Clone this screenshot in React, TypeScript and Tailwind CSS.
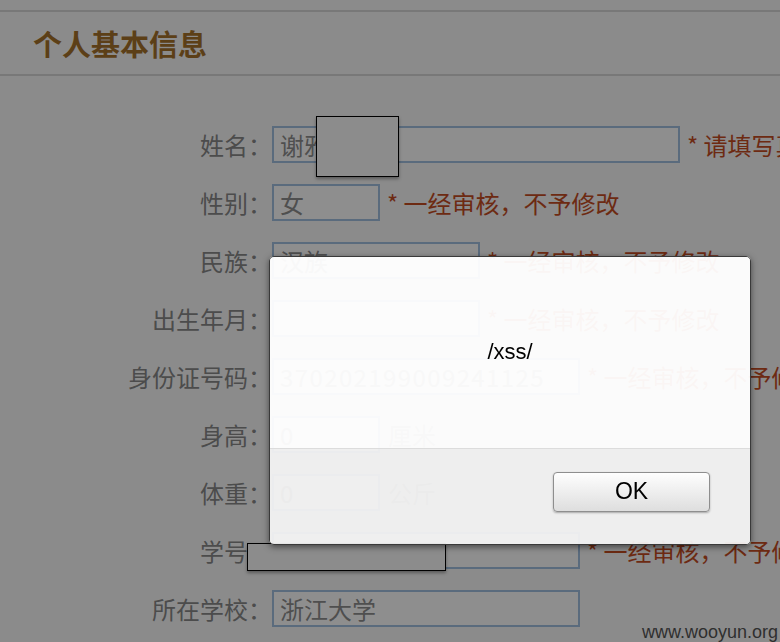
import React from 'react';

interface Row {
  label: string;
  value: string;
  width: string;
  note?: string;
  unit?: string;
}

const rows: Row[] = [
  { label: '姓名：', value: '谢雅', width: 'w-[408px]', note: '* 请填写真实姓名' },
  { label: '性别：', value: '女', width: 'w-[108px]', note: '* 一经审核，不予修改' },
  { label: '民族：', value: '汉族', width: 'w-[208px]', note: '* 一经审核，不予修改' },
  { label: '出生年月：', value: '', width: 'w-[208px]', note: '* 一经审核，不予修改' },
  { label: '身份证号码：', value: '370202199009241125', width: 'w-[308px]', note: '* 一经审核，不予修改' },
  { label: '身高：', value: '0', width: 'w-[108px]', unit: '厘米' },
  { label: '体重：', value: '0', width: 'w-[108px]', unit: '公斤' },
  { label: '学号：', value: '', width: 'w-[308px]', note: '* 一经审核，不予修改' },
  { label: '所在学校：', value: '浙江大学', width: 'w-[308px]' },
];

const cjk = { fontFamily: '"Noto Sans CJK SC", "Noto Sans", sans-serif' };

const App = () => {
  return (
    <div className="relative w-[780px] h-[642px] overflow-hidden bg-[#8b8b8b]" style={cjk}>
      {/* header */}
      <div className="pt-[10px]">
        <div className="h-[66px] border-t-2 border-b-2 border-[#787878] flex items-center pl-[33px]">
          <h1 className="text-[29px] font-bold text-[#5c3f17] leading-none">个人基本信息</h1>
        </div>
      </div>

      {/* form */}
      <div className="pt-[50px] flex flex-col gap-[21px]">
        {rows.map(r => (
          <div key={r.label} className="flex items-center h-[37px] whitespace-nowrap">
            <label className="w-[272px] shrink-0 text-right text-[24px] text-[#4c4c4c] leading-none">{r.label}</label>
            <div className={`${r.width} shrink-0 h-[37px] border-2 border-[#5a6b7d] bg-[#8e8e8e] px-[6px] flex items-center text-[24px] text-[#4f4f4f] leading-none`}>
              <span className={r.value.length > 10 ? 'tracking-[1.4px]' : ''}>{r.value}</span>
            </div>
            {r.note && <span className="ml-[7px] text-[24px] text-[#6d2a12] leading-none">{r.note}</span>}
            {r.unit && <span className="ml-[8px] text-[24px] text-[#4f4f4f] leading-none">{r.unit}</span>}
          </div>
        ))}
      </div>

      {/* censor boxes */}
      <div className="absolute left-[316px] top-[116px] w-[83px] h-[61px] bg-[#8c8c8c] border border-black shadow-[0_2px_3px_rgba(0,0,0,0.35)]" />
      <div className="absolute left-[247px] top-[543px] w-[199px] h-[28px] bg-[#8c8c8c] border border-black shadow-[0_2px_3px_rgba(0,0,0,0.35)]" />

      {/* alert dialog */}
      <div className="absolute left-[269px] top-[256px] w-[482px] h-[289px] rounded-[5px] border border-[#3a3a3a] shadow-[0_2px_6px_rgba(0,0,0,0.5)] overflow-hidden flex flex-col backdrop-brightness-150" style={{ fontFamily: '"Liberation Sans", Arial, sans-serif' }}>
        <div className="h-[191px] bg-[#fdfdfd]/[0.96] flex items-center justify-center">
          <span className="text-[22px] text-black mt-[-2px]">/xss/</span>
        </div>
        <div className="flex-1 bg-[#efefef]/[0.96] border-t border-[#dcdcdc] flex items-center justify-end pr-[40px]">
          <button className="w-[157px] h-[40px] mt-[-10px] rounded-[4px] border border-[#8e8e8e] bg-gradient-to-b from-[#fefefe] to-[#dedede] shadow-[0_1px_2px_rgba(0,0,0,0.3)] text-[23px] text-black leading-none">
            OK
          </button>
        </div>
      </div>

      {/* watermark */}
      <div className="absolute right-[2px] bottom-[1px] text-[18px] text-[#2f2f2f] leading-none" style={{ fontFamily: '"Liberation Sans", Arial, sans-serif' }}>
        www.wooyun.org
      </div>
    </div>
  );
};

export default App;
